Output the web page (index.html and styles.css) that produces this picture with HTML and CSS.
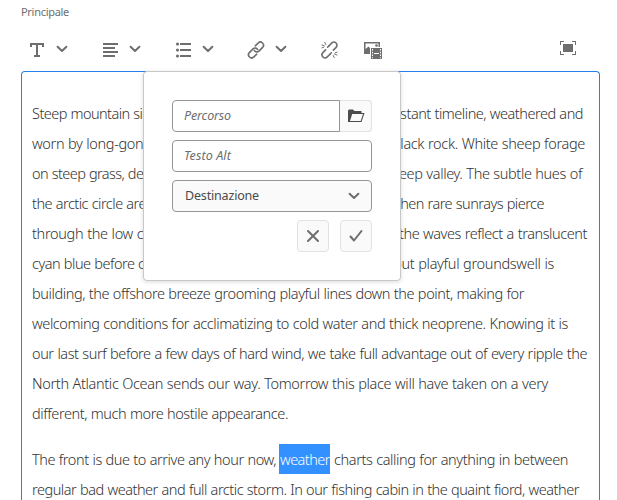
FILE: index.html
```html
<!DOCTYPE html>
<html lang="it">
<head>
<meta charset="utf-8">
<title>Principale</title>
<link rel="stylesheet" href="styles.css">
</head>
<body>
<div class="field">
  <div class="label"><span data-w="48">Principale</span></div>
  <div class="toolbar">
    <div class="tool"><svg width="18" height="18"><path d="M2 2H16V6H14V4H10V14H12V16H6V14H8V4H4V6H2Z"/></svg><svg class="chev" width="12" height="8"><path d="M1.6 1.8L6 6L10.4 1.8"/></svg></div>
    <div class="tool"><svg width="18" height="18"><path d="M2 2h15v2H2zM2 6h12v2H2zM2 10h15v2H2zM2 14h12v2H2z"/></svg><svg class="chev" width="12" height="8"><path d="M1.6 1.8L6 6L10.4 1.8"/></svg></div>
    <div class="tool"><svg width="18" height="18"><path d="M6 2h11v2H6zM6 8h11v2H6zM6 14h11v2H6z"/><circle cx="3.500" cy="3" r="1.600"/><circle cx="3.500" cy="9" r="1.600"/><circle cx="3.500" cy="15" r="1.600"/></svg><svg class="chev" width="12" height="8"><path d="M1.6 1.8L6 6L10.4 1.8"/></svg></div>
    <div class="tool"><svg class="line" width="18" height="18"><path d="M8.300 4.800L11.100 2.100a3 3 0 0 1 4.500 4.300L12 10.100a3 3 0 0 1-4.700-.7M9.700 13.200L6.900 15.900a3 3 0 0 1-4.500-4.300L6 7.900a3 3 0 0 1 4.700.7"/></svg><svg class="chev" width="12" height="8"><path d="M1.6 1.8L6 6L10.4 1.8"/></svg></div>
    <div class="tool single"><svg class="line" width="19" height="18"><path d="M9 4.800L11.700 2.100a3 3 0 0 1 4.400 4.300L13.400 9.100M10 13.200L7.300 15.900a3 3 0 0 1-4.400-4.300L5.600 8.900"/><path d="M9 4.800L7.600 6.200M10 13.200L11.400 11.800"/><path class="thin" d="M2 4L4.500 5M4.800 1.500L5.800 3.500M2 6.800L3.500 6.400M17 14L14.500 13M14.200 16.500L13.200 14.500M17 11.200L15.500 11.600"/></svg></div>
    <div class="tool single"><svg width="19" height="18"><path d="M1 1h16v5h-1.500V2.500h-13v5.500L5.500 5.500l1.500 1.500V13H1z"/><circle cx="13.500" cy="4.500" r="1.300"/><path fill-rule="evenodd" d="M8 7H19V18H8zM9 8v1.500h1V8zM9 10.800v1.500h1v-1.500zM9 13.600v1.500h1v-1.500zM9 16.200v1h1v-1zM17 8v1.500h1V8zM17 10.800v1.500h1v-1.500zM17 13.600v1.500h1v-1.500zM17 16.200v1h1v-1zM11 12v1h5v-1z"/></svg></div>
    <svg class="full" width="16" height="14"><path d="M0 0h4v1H1v3H0zM12 0h4v4h-1V1h-3zM0 10h1v3h3v1H0zM15 10h1v4h-4v-1h3zM3 3h10v8H3z"/></svg>
  </div>
  <div class="editor">
    <div class="text">
    <p>
      <span class="row"><span data-w="126">Steep mountain side</span><span data-w="194">distant timeline, weathered and</span></span>
      <span class="row r2"><span data-w="119">worn by long-gone</span><span data-w="193">black rock. White sheep forage</span></span>
      <span class="row r3"><span data-w="127">on steep grass, deep</span><span data-w="194">steep valley. The subtle hues of</span></span>
      <span class="row r4"><span data-w="114">the arctic circle are</span><span data-w="154">when rare sunrays pierce</span></span>
      <span class="row r5"><span data-w="131">through the low clou</span><span data-w="188">the waves reflect a translucent</span></span>
      <span class="row r6"><span data-w="131">cyan blue before cras</span><span data-w="161">but playful groundswell is</span></span>
      <span class="row"><span data-w="492">building, the offshore breeze grooming playful lines down the point, making for</span></span>
      <span class="row"><span data-w="536">welcoming conditions for acclimatizing to cold water and thick neoprene. Knowing it is</span></span>
      <span class="row"><span data-w="555">our last surf before a few days of hard wind, we take full advantage out of every ripple the</span></span>
      <span class="row"><span data-w="516">North Atlantic Ocean sends our way. Tomorrow this place will have taken on a very</span></span>
      <span class="row"><span data-w="256">different, much more hostile appearance.</span></span>
    </p>
    <p>
      <span class="row words"><span data-w="244">The front is due to arrive any hour now,</span><mark><span data-w="50">weather</span></mark><span data-w="234">charts calling for anything in between</span></span>
      <span class="row"><span data-w="547">regular bad weather and full arctic storm. In our fishing cabin in the quaint fiord, weather</span></span>
    </p>
    </div>
    <div class="popover">
      <div class="path"><div class="input"><span data-w="47">Percorso</span></div><div class="btn browse"><svg width="18" height="14"><path d="M1 13V1.500L2 .5H6L7.500 2H14.500V4H17.500L14.500 13ZM3 11.900H13.700L16 5.100H5.200Z" fill-rule="evenodd"/></svg></div></div>
      <div class="input"><span data-w="47">Testo Alt</span></div>
      <div class="input select"><span data-w="74">Destinazione</span><svg class="chev" width="12" height="8"><path d="M1.6 1.8L6 6L10.4 1.8"/></svg></div>
      <div class="actions"><div class="btn"><svg class="mark" width="14" height="14"><path d="M2 2L12 12M12 2L2 12"/></svg></div><div class="btn"><svg class="mark" width="14" height="14"><path d="M1.500 7.500L5 11.500L12.500 2"/></svg></div></div>
    </div>
  </div>
</div>
<script src="fit.js"></script>
</body>
</html>
```
FILE: fit.js
```js
// Tracks each run of text so that it fills its set measure.
document.querySelectorAll('[data-w]').forEach(function (el) {
  var gap = Number(el.dataset.w) - el.getBoundingClientRect().width;
  el.style.letterSpacing = (gap / el.textContent.length).toFixed(4) + 'px';
});
```
FILE: styles.css
```css
* { box-sizing: border-box; }
body { margin: 0; background: #fff; height: 500px; overflow: hidden; font-family: "Noto Sans", "Open Sans", sans-serif; color: #323232; }
.field { width: 579px; margin-left: 21px; }
.label { height: 26px; padding-top: 3px; font-size: 11px; line-height: 17px; color: #6e6e6e; }
.toolbar { height: 45px; display: flex; align-items: center; padding: 3px 24px 0 7px; }
.tool { width: 73px; display: flex; align-items: center; gap: 10px; }
.tool.single { width: 43px; }
.tool .chev { margin-top: -2px; }
svg { display: block; flex: none; fill: #6e6e6e; }
.chev { fill: none; stroke: #6e6e6e; stroke-width: 2; stroke-linecap: round; stroke-linejoin: round; }
.line { fill: none; stroke: #6e6e6e; stroke-width: 1.6; stroke-linecap: round; }
.thin { stroke-width: 1; }
.full { margin: -5px 0 0 auto; }
.editor { position: relative; height: 429px; border: 1px solid #2680eb; border-bottom: 0; border-radius: 4px 4px 0 0; font-size: 14.5px; font-weight: 300; line-height: 30px; word-spacing: .4px; }
.text { height: 428px; padding: 26px 10px 0; overflow: hidden; }
p { margin: 0 0 16px; }
.row { display: flex; justify-content: space-between; height: 30px; white-space: nowrap; width: 551px; }
.r2 { width: 553px; }
.r3 { width: 550px; }
.r4 { width: 512px; }
.r5 { width: 555px; }
.r6 { width: 522px; }
.words { justify-content: flex-start; }
mark { background: #3390ff; color: #fff; margin: 0 4px 0 3px; height: 30px; width: 51px; padding-left: 1px; }
.popover { position: absolute; left: 121px; top: -1px; width: 258px; height: 210px; padding: 28px; background: #fff; border: 1px solid #c8c8c8; border-radius: 4px; box-shadow: 0 1px 4px rgba(0,0,0,.15); display: flex; flex-direction: column; gap: 8px; font-size: 12.5px; font-weight: 400; }
.path { display: flex; }
.input { height: 32px; width: 200px; border: 1px solid #959595; border-radius: 4px; padding: 0 11px; line-height: 30px; font-style: italic; color: #6e6e6e; white-space: nowrap; word-spacing: 0; }
.path .input { width: 168px; border-radius: 4px 0 0 4px; }
.input.select { display: flex; align-items: center; justify-content: space-between; font-style: normal; background: #fafafa; color: #4b4b4b; padding: 0 11px 0 12px; }
.btn { width: 32px; height: 32px; border: 1px solid #e1e1e1; border-radius: 4px; background: #fafafa; display: flex; align-items: center; justify-content: center; }
.browse { border-left: 0; border-radius: 0 4px 4px 0; }
.browse svg { fill: #4b4b4b; }
.actions { display: flex; justify-content: flex-end; gap: 11px; }
.mark { fill: none; stroke: #6e6e6e; stroke-width: 2; stroke-linecap: round; stroke-linejoin: round; }
```
